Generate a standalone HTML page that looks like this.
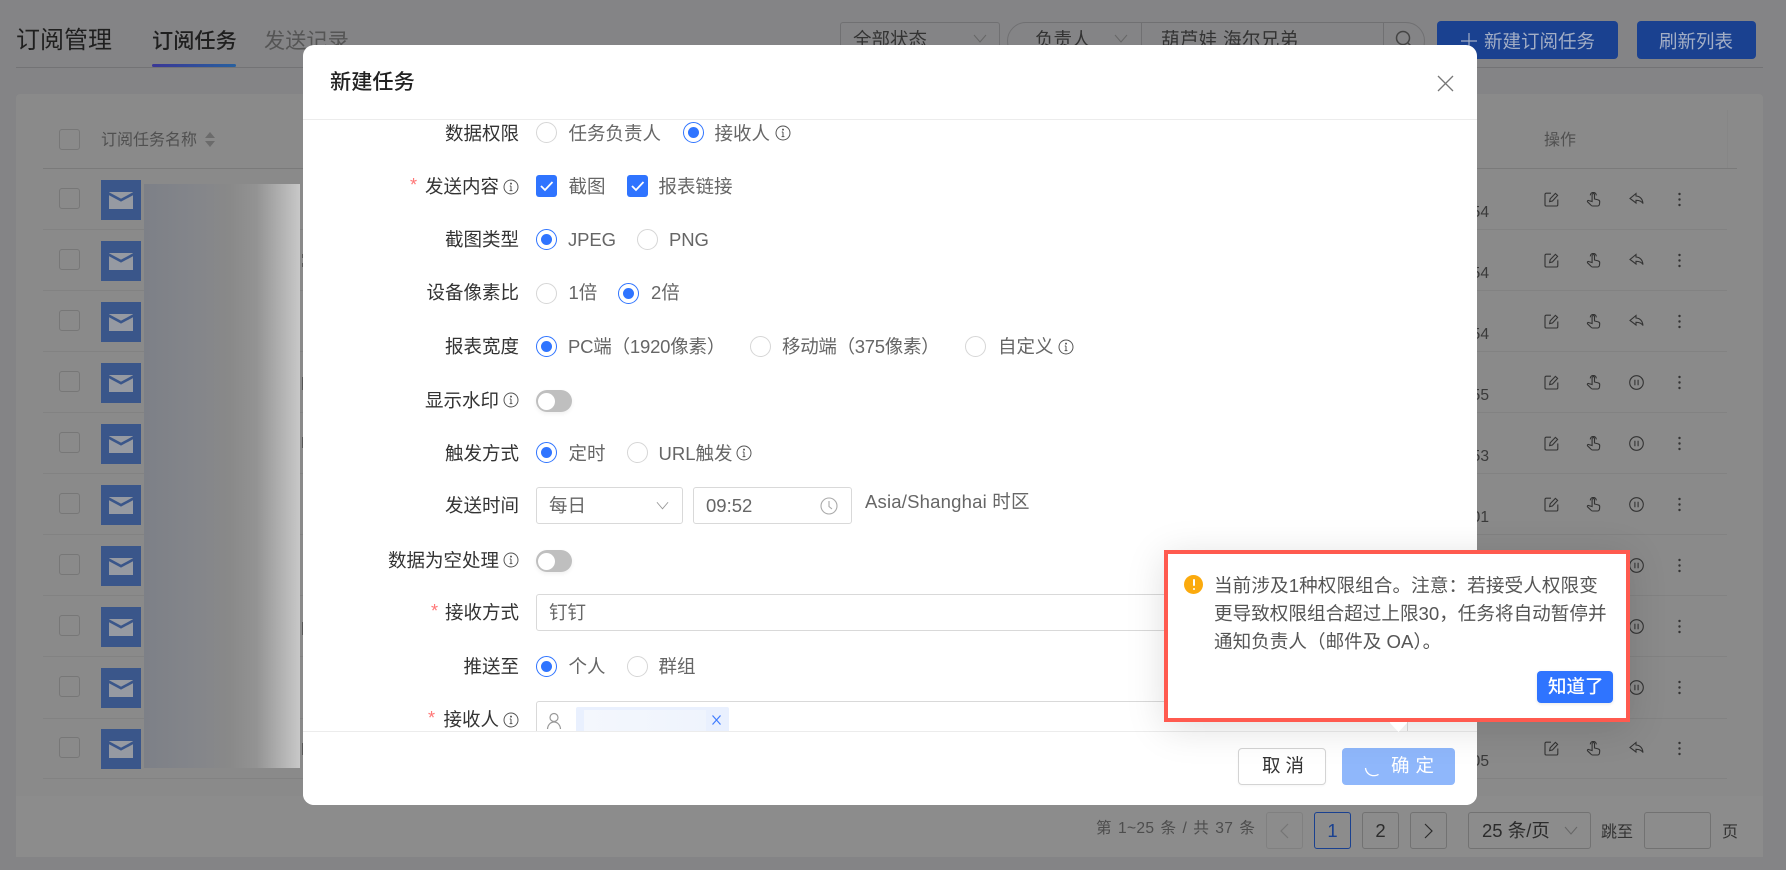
<!DOCTYPE html>
<html lang="zh-CN">
<head>
<meta charset="utf-8">
<title>新建任务</title>
<style>
html,body{margin:0;padding:0;width:1786px;height:870px;overflow:hidden;background:#848486;font-family:"Liberation Sans","Noto Sans CJK SC",sans-serif}
#p{position:relative;width:1786px;height:870px;overflow:hidden}
#p div,#p span,#p svg{position:absolute;box-sizing:border-box}
.t{white-space:nowrap;line-height:26px;height:26px;font-size:18.5px;color:#666}
.l{white-space:nowrap;line-height:26px;height:26px;font-size:18.5px;color:#333;right:1267px;text-align:right}
.li{right:1287px}
.r{width:21px;height:21px;border-radius:50%;border:1px solid #d6d6d6;background:#fff}
.on{border-color:#2f74ff}
.on::after{content:"";position:absolute;left:4px;top:4px;width:11px;height:11px;border-radius:50%;background:#2f74ff}
.s{left:536px;width:36px;height:22px;border-radius:11px;background:#bfbfbf;box-shadow:0 2px 4px rgba(0,0,0,.06)}
.s::after{content:"";position:absolute;left:2px;top:2.5px;width:17px;height:17px;border-radius:50%;background:#fff}
.st{color:#f77;font-size:18.2px;line-height:26px;height:26px;white-space:nowrap}
.i{width:16px;height:16px;fill:none;stroke:#555;stroke-width:1}
.cb{left:59px;width:21px;height:21px;border:1px solid #777;border-radius:3px}
.m{left:101px;width:40px;height:40px}
.a{width:15px;height:15px;fill:none;stroke:#333;stroke-width:1.1}
.tm{font-size:15.6px;color:#3a3a3a;line-height:20px;height:20px;right:297px;white-space:nowrap}
.hl{left:43px;width:1684px;height:1px;background:#828282}
.pg{width:37px;height:37px;border:1px solid #727272;border-radius:3px;text-align:center;line-height:35px;font-size:18.5px;color:#2c2c2c;top:812px}
.box{border:1px solid #d9d9d9;border-radius:3px;background:#fff}
.pl{font-size:18.6px;color:#555;white-space:nowrap;line-height:26px;height:26px}
.tk{left:301.5px;width:1.5px;background:#565656}
</style>
</head>
<body>
<div id="p">
<svg width="0" height="0" style="left:0;top:0">
<defs>
<symbol id="info" viewBox="0 0 16 16"><circle cx="8" cy="8" r="7"/><path d="M8 7v4.6M6.8 7H8M6.6 11.6h2.8"/><circle cx="8" cy="4.6" r=".5" fill="#555"/></symbol>
<symbol id="mail" viewBox="0 0 40 40"><rect width="40" height="40" fill="#3a568a"/><rect x="8" y="12" width="24" height="17" fill="#969aa2"/><path d="M7 13.2 20 20.2 33 13.2" fill="none" stroke="#3a568a" stroke-width="2.6"/></symbol>
<symbol id="edit" viewBox="0 0 15 15"><path d="M7 1.2H2.2A1.2 1.2 0 0 0 1 2.4v10.4A1.2 1.2 0 0 0 2.2 14h10.4a1.2 1.2 0 0 0 1.2-1.2V7.5"/><path d="M5.6 9.6 6.2 6.8 11.4 1.4 13.6 3.4 8.4 9z"/></symbol>
<symbol id="hand" viewBox="0 0 15 15"><path d="M4.3 3.4a3 3 0 0 1 6 0"/><path d="M6.1 9.5V2.8a1.2 1.2 0 0 1 2.4 0V7l3.7.9c1 .2 1.6 1 1.5 2l-.2 2.2c-.1 1-1 1.9-2 1.9H6.5c-.7 0-1.3-.4-1.7-1L1.5 9.8c-.5-.9.5-1.800 1.400-1.200z"/></symbol>
<symbol id="reply" viewBox="0 0 15 15"><path d="M7 1.5 1 6.5l6 4.5V8.300c3 0 5.500.7 7 3.200C13.500 7 11 4.300 7 4z"/></symbol>
<symbol id="pause" viewBox="0 0 15 15"><circle cx="7.5" cy="7.5" r="6.8"/><path d="M5.9 4.8v5.4M9.1 4.8v5.4"/></symbol>
<symbol id="dots" viewBox="0 0 15 15"><circle cx="7.5" cy="2" r="1.2" fill="#333" stroke="none"/><circle cx="7.5" cy="7.5" r="1.2" fill="#333" stroke="none"/><circle cx="7.5" cy="13" r="1.2" fill="#333" stroke="none"/></symbol>
<symbol id="chev" viewBox="0 0 14 9"><path d="M1 1l6 7 6-7" fill="none"/></symbol>
</defs>
</svg>

<!-- page header -->
<div class="t" style="left:16px;top:28px;font-size:24px;color:#1f1f1f">订阅管理</div>
<div class="t" style="left:152px;top:29px;font-size:21.2px;color:#1f1f1f;font-weight:500">订阅任务</div>
<div class="t" style="left:264px;top:29px;font-size:21.2px;color:#555">发送记录</div>
<div style="left:16px;top:67px;width:1747px;height:1px;background:#737375"></div>
<div style="left:152px;top:64px;width:84px;height:3px;border-radius:2px;background:linear-gradient(90deg,#3a3796,#27609f)"></div>

<div style="left:840px;top:22px;width:160px;height:38px;border:1px solid #707072;border-radius:3px"></div>
<div class="t" style="left:853px;top:27px;color:#333">全部状态</div>
<svg style="left:973px;top:34px;width:14px;height:9px;stroke:#666"><use href="#chev"/></svg>
<div style="left:1007px;top:22px;width:418px;height:38px;border:1px solid #707072;border-radius:19px"></div>
<div style="left:1141px;top:22px;width:1px;height:38px;background:#707072"></div>
<div style="left:1383px;top:22px;width:1px;height:38px;background:#707072"></div>
<div class="t" style="left:1035px;top:27px;color:#333">负责人</div>
<svg style="left:1114px;top:34px;width:14px;height:9px;stroke:#666"><use href="#chev"/></svg>
<div class="t" style="left:1161px;top:27px;color:#333;letter-spacing:.35px">葫芦娃 海尔兄弟</div>
<svg style="left:1394px;top:29px;width:20px;height:20px;fill:none;stroke:#444;stroke-width:1.5" viewBox="0 0 20 20"><circle cx="9" cy="9" r="6.5"/><path d="M14 14l4 4"/></svg>
<div style="left:1437px;top:21px;width:181px;height:38px;border-radius:4px;background:#1a4190"></div>
<div style="left:1637px;top:21px;width:119px;height:38px;border-radius:4px;background:#1a4190"></div>
<svg style="left:1461px;top:33px;width:16px;height:16px;stroke:#a3aec5;stroke-width:1.2" viewBox="0 0 16 16"><path d="M8 0v16M0 8h16"/></svg>
<div class="t" style="left:1484px;top:29px;color:#a3aec5">新建订阅任务</div>
<div class="t" style="left:1659px;top:29px;color:#a3aec5">刷新列表</div>

<!-- table card -->
<div style="left:16px;top:94px;width:1747px;height:763px;background:#8a8a8a;border-radius:4px 4px 0 0"></div>
<div style="left:16px;top:796px;width:1747px;height:61px;background:#8c8c8c"></div>
<div class="cb" style="top:129px"></div>
<div class="t" style="left:101px;top:128px;font-size:16px;color:#505050">订阅任务名称</div>
<div style="left:205px;top:132px;width:0;height:0;border-left:5.5px solid transparent;border-right:5.5px solid transparent;border-bottom:6px solid #6b6b6b"></div>
<div style="left:205px;top:141px;width:0;height:0;border-left:5.5px solid transparent;border-right:5.5px solid transparent;border-top:6px solid #6b6b6b"></div>
<div class="t" style="left:1544px;top:128px;font-size:16px;color:#505050">操作</div>
<div style="left:43px;top:168px;width:1694px;height:1px;background:#7a7a7a"></div>
<div style="left:1727px;top:110px;width:1px;height:58px;background:#868686"></div>

<div class="hl" style="top:229px"></div><div class="hl" style="top:290px"></div><div class="hl" style="top:351px"></div><div class="hl" style="top:412px"></div><div class="hl" style="top:473px"></div><div class="hl" style="top:534px"></div><div class="hl" style="top:595px"></div><div class="hl" style="top:656px"></div><div class="hl" style="top:718px"></div><div class="hl" style="top:778px"></div>

<div class="cb" style="top:188px"></div><div class="cb" style="top:249px"></div><div class="cb" style="top:310px"></div><div class="cb" style="top:371px"></div><div class="cb" style="top:432px"></div><div class="cb" style="top:493px"></div><div class="cb" style="top:554px"></div><div class="cb" style="top:615px"></div><div class="cb" style="top:676px"></div><div class="cb" style="top:737px"></div>

<svg class="m" style="top:180px"><use href="#mail"/></svg><svg class="m" style="top:241px"><use href="#mail"/></svg><svg class="m" style="top:302px"><use href="#mail"/></svg><svg class="m" style="top:363px"><use href="#mail"/></svg><svg class="m" style="top:424px"><use href="#mail"/></svg><svg class="m" style="top:485px"><use href="#mail"/></svg><svg class="m" style="top:546px"><use href="#mail"/></svg><svg class="m" style="top:607px"><use href="#mail"/></svg><svg class="m" style="top:668px"><use href="#mail"/></svg><svg class="m" style="top:729px"><use href="#mail"/></svg>

<div style="left:144px;top:184px;width:156px;height:584px;background:linear-gradient(90deg,#7d8087 0,#83858a 30%,#898989 55%,#939393 72%,#c8c8c8 100%)"></div>
<div class="tk" style="top:254px;height:4px"></div><div class="tk" style="top:263px;height:4px"></div>
<div class="tk" style="top:377px;height:13px"></div>
<div class="tk" style="top:437px;height:11px"></div>
<div class="tk" style="top:622px;height:13px"></div>
<div class="tk" style="top:743px;height:12px"></div>

<div class="tm" style="top:203px">00:54</div>
<div class="tm" style="top:264px">00:54</div>
<div class="tm" style="top:325px">00:54</div>
<div class="tm" style="top:386px">00:55</div>
<div class="tm" style="top:447px">00:53</div>
<div class="tm" style="top:508px">00:01</div>
<div class="tm" style="top:752px">00:05</div>

<svg class="a" style="left:1544px;top:192px"><use href="#edit"/></svg><svg class="a" style="left:1586px;top:192px"><use href="#hand"/></svg><svg class="a" style="left:1629px;top:192px"><use href="#reply"/></svg><svg class="a" style="left:1672px;top:192px"><use href="#dots"/></svg>
<svg class="a" style="left:1544px;top:253px"><use href="#edit"/></svg><svg class="a" style="left:1586px;top:253px"><use href="#hand"/></svg><svg class="a" style="left:1629px;top:253px"><use href="#reply"/></svg><svg class="a" style="left:1672px;top:253px"><use href="#dots"/></svg>
<svg class="a" style="left:1544px;top:314px"><use href="#edit"/></svg><svg class="a" style="left:1586px;top:314px"><use href="#hand"/></svg><svg class="a" style="left:1629px;top:314px"><use href="#reply"/></svg><svg class="a" style="left:1672px;top:314px"><use href="#dots"/></svg>
<svg class="a" style="left:1544px;top:375px"><use href="#edit"/></svg><svg class="a" style="left:1586px;top:375px"><use href="#hand"/></svg><svg class="a" style="left:1629px;top:375px"><use href="#pause"/></svg><svg class="a" style="left:1672px;top:375px"><use href="#dots"/></svg>
<svg class="a" style="left:1544px;top:436px"><use href="#edit"/></svg><svg class="a" style="left:1586px;top:436px"><use href="#hand"/></svg><svg class="a" style="left:1629px;top:436px"><use href="#pause"/></svg><svg class="a" style="left:1672px;top:436px"><use href="#dots"/></svg>
<svg class="a" style="left:1544px;top:497px"><use href="#edit"/></svg><svg class="a" style="left:1586px;top:497px"><use href="#hand"/></svg><svg class="a" style="left:1629px;top:497px"><use href="#pause"/></svg><svg class="a" style="left:1672px;top:497px"><use href="#dots"/></svg>
<svg class="a" style="left:1629px;top:558px"><use href="#pause"/></svg><svg class="a" style="left:1672px;top:558px"><use href="#dots"/></svg>
<svg class="a" style="left:1629px;top:619px"><use href="#pause"/></svg><svg class="a" style="left:1672px;top:619px"><use href="#dots"/></svg>
<svg class="a" style="left:1629px;top:680px"><use href="#pause"/></svg><svg class="a" style="left:1672px;top:680px"><use href="#dots"/></svg>
<svg class="a" style="left:1544px;top:741px"><use href="#edit"/></svg><svg class="a" style="left:1586px;top:741px"><use href="#hand"/></svg><svg class="a" style="left:1629px;top:741px"><use href="#reply"/></svg><svg class="a" style="left:1672px;top:741px"><use href="#dots"/></svg>

<!-- pagination -->
<div class="t" style="left:1096px;top:816px;font-size:15.6px;color:#4d4d4d;letter-spacing:.3px;word-spacing:1.5px">第 1~25 条 / 共 37 条</div>
<div class="pg" style="left:1266px;border-color:#808080"></div>
<svg style="left:1280px;top:823px;width:9px;height:16px;fill:none;stroke:#757575;stroke-width:1.2" viewBox="0 0 9 16"><path d="M8 1 1 8l7 7"/></svg>
<div class="pg" style="left:1314px;border-color:#1a4190;color:#1a4190;font-weight:500">1</div>
<div class="pg" style="left:1362px">2</div>
<div class="pg" style="left:1410px"></div>
<svg style="left:1424px;top:823px;width:9px;height:16px;fill:none;stroke:#2c2c2c;stroke-width:1.2" viewBox="0 0 9 16"><path d="M1 1l7 7-7 7"/></svg>
<div class="pg" style="left:1468px;width:123px;text-align:left;padding-left:13px;white-space:nowrap">25 条/页</div>
<svg style="left:1564px;top:826px;width:14px;height:9px;stroke:#666"><use href="#chev"/></svg>
<div class="t" style="left:1601px;top:820px;font-size:16px;color:#333">跳至</div>
<div class="pg" style="left:1644px;width:67px"></div>
<div class="t" style="left:1722px;top:820px;font-size:16px;color:#333">页</div>

<!-- modal -->
<div style="left:303px;top:45px;width:1174px;height:760px;background:#fff;border-radius:11px"></div>
<div class="t" style="left:330px;top:70px;font-size:21.2px;color:#222;font-weight:500">新建任务</div>
<svg style="left:1437px;top:75px;width:17px;height:17px;stroke:#777;stroke-width:1.3;fill:none" viewBox="0 0 17 17"><path d="M1 1l15 15M16 1 1 16"/></svg>
<div style="left:303px;top:119px;width:1174px;height:1px;background:#ececec"></div>

<!-- form -->
<div class="l" style="top:121px">数据权限</div>
<div class="r" style="left:536px;top:122px"></div><div class="t" style="left:568.5px;top:121px">任务负责人</div>
<div class="r on" style="left:683px;top:122px"></div><div class="t" style="left:714.5px;top:121px">接收人</div>
<svg class="i" style="left:775px;top:125px"><use href="#info"/></svg>

<div class="st" style="left:410px;top:172px">*</div>
<div class="l li" style="top:174px">发送内容</div>
<svg class="i" style="left:503px;top:179px"><use href="#info"/></svg>
<div style="left:536px;top:175px;width:21px;height:22px;border-radius:3px;background:#2f74ff"></div>
<svg style="left:536px;top:175px;width:21px;height:22px;fill:none;stroke:#fff;stroke-width:1.8" viewBox="0 0 21 22"><path d="M5 11l4 4 7.5-8"/></svg>
<div class="t" style="left:568.5px;top:174px">截图</div>
<div style="left:627px;top:175px;width:21px;height:22px;border-radius:3px;background:#2f74ff"></div>
<svg style="left:627px;top:175px;width:21px;height:22px;fill:none;stroke:#fff;stroke-width:1.8" viewBox="0 0 21 22"><path d="M5 11l4 4 7.5-8"/></svg>
<div class="t" style="left:658.5px;top:174px">报表链接</div>

<div class="l" style="top:227px">截图类型</div>
<div class="r on" style="left:536px;top:229px"></div><div class="t" style="left:568px;top:227px;letter-spacing:-.1px">JPEG</div>
<div class="r" style="left:637px;top:229px"></div><div class="t" style="left:669px;top:227px;letter-spacing:-.1px">PNG</div>

<div class="l" style="top:280px">设备像素比</div>
<div class="r" style="left:536px;top:283px"></div><div class="t" style="left:568.5px;top:280px">1倍</div>
<div class="r on" style="left:618px;top:283px"></div><div class="t" style="left:651px;top:280px">2倍</div>

<div class="l" style="top:334px">报表宽度</div>
<div class="r on" style="left:536px;top:336px"></div><div class="t" style="left:568px;top:334px;letter-spacing:-.2px">PC端（1920像素）</div>
<div class="r" style="left:750px;top:336px"></div><div class="t" style="left:782px;top:334px;letter-spacing:-.3px">移动端（375像素）</div>
<div class="r" style="left:965px;top:336px"></div><div class="t" style="left:998px;top:334px">自定义</div>
<svg class="i" style="left:1058px;top:339px"><use href="#info"/></svg>

<div class="l li" style="top:388px">显示水印</div>
<svg class="i" style="left:503px;top:392px"><use href="#info"/></svg>
<div class="s" style="top:390px"></div>

<div class="l" style="top:441px">触发方式</div>
<div class="r on" style="left:536px;top:442px"></div><div class="t" style="left:568.5px;top:441px">定时</div>
<div class="r" style="left:627px;top:442px"></div><div class="t" style="left:658.5px;top:441px">URL触发</div>
<svg class="i" style="left:736px;top:445px"><use href="#info"/></svg>

<div class="l" style="top:493px">发送时间</div>
<div class="box" style="left:536px;top:487px;width:147px;height:37px"></div>
<div class="t" style="left:549px;top:493px">每日</div>
<svg style="left:656px;top:501px;width:13px;height:9px;stroke:#999"><use href="#chev"/></svg>
<div class="box" style="left:693px;top:487px;width:159px;height:37px"></div>
<div class="t" style="left:706px;top:493px">09:52</div>
<svg style="left:820px;top:497px;width:18px;height:18px;fill:none;stroke:#aaa;stroke-width:1.1" viewBox="0 0 18 18"><circle cx="9" cy="9" r="8"/><path d="M9 4v5.5l3 2.5"/></svg>
<div class="t" style="left:865px;top:489px;letter-spacing:.2px">Asia/Shanghai 时区</div>

<div class="l li" style="top:548px">数据为空处理</div>
<svg class="i" style="left:503px;top:552px"><use href="#info"/></svg>
<div class="s" style="top:550px"></div>

<div class="st" style="left:431px;top:598px">*</div>
<div class="l" style="top:600px">接收方式</div>
<div class="box" style="left:536px;top:594px;width:872px;height:37px"></div>
<div class="t" style="left:549px;top:600px">钉钉</div>

<div class="l" style="top:654px">推送至</div>
<div class="r on" style="left:536px;top:656px"></div><div class="t" style="left:568.5px;top:654px">个人</div>
<div class="r" style="left:627px;top:656px"></div><div class="t" style="left:658.5px;top:654px">群组</div>

<div class="st" style="left:428px;top:705px">*</div>
<div class="l li" style="top:707px">接收人</div>
<svg class="i" style="left:503px;top:712px"><use href="#info"/></svg>
<div class="box" style="left:536px;top:701px;width:872px;height:60px"></div>
<svg style="left:546px;top:712px;width:16px;height:18px;fill:none;stroke:#999;stroke-width:1.2" viewBox="0 0 16 18"><circle cx="8" cy="5.5" r="4"/><path d="M1.5 17c.3-4 3-7 6.5-7s6.2 3 6.5 7"/></svg>
<div style="left:576px;top:707px;width:153px;height:40px;border-radius:2px;background:#e9f0fe"></div>
<div style="left:584px;top:710px;width:122px;height:30px;background:linear-gradient(90deg,#f4f7fd,#eff4fd)"></div>
<svg style="left:712px;top:715px;width:9px;height:10px;stroke:#3f7cff;stroke-width:1.2" viewBox="0 0 9 10"><path d="M.5.5l8 9M8.5.5l-8 9"/></svg>

<!-- modal footer -->
<div style="left:303px;top:731px;width:1174px;height:74px;background:#fff;border-top:1px solid #ececec;border-radius:0 0 11px 11px"></div>
<div style="left:1238px;top:748px;width:88px;height:37px;border:1px solid #d4d4d4;border-radius:4px;background:#fff;box-shadow:0 1px 2px rgba(0,0,0,.04)"></div>
<div class="t" style="left:1262px;top:753px;color:#333;letter-spacing:5px">取消</div>
<div style="left:1342px;top:748px;width:113px;height:37px;border-radius:4px;background:#8fb7fb"></div>
<svg style="left:1363px;top:764px;width:18px;height:14px;fill:none;stroke:#fff;stroke-width:1.3" viewBox="0 0 18 14"><path d="M2.5 4c.5 5 4.5 8 9.5 7.600 1.500-.1 2.800-.6 3.500-1.200"/></svg>
<div class="t" style="left:1391px;top:753px;color:#fff;letter-spacing:6px">确定</div>

<!-- popover -->
<div style="left:1164px;top:550px;width:466px;height:172px;background:#fff;border:4px solid #ff5a4f;box-shadow:0 6px 36px rgba(0,0,0,.13)"></div>
<div style="left:1407px;top:722px;width:1px;height:9px;background:#cfcfcf"></div>
<div style="left:1390px;top:722px;width:17px;height:10px;background:#fff;clip-path:polygon(0 0,100% 0,100% 10%,50% 100%,0 10%)"></div>
<div style="left:1184px;top:575px;width:19px;height:19px;border-radius:50%;background:#fbaa0d"></div>
<div style="left:1192.5px;top:579px;width:2px;height:7px;border-radius:1px;background:#fff"></div>
<div style="left:1192.5px;top:588px;width:2px;height:2px;background:#fff;border-radius:1px"></div>
<div class="pl" style="left:1214px;top:573px;letter-spacing:.08px">当前涉及1种权限组合。注意：若接受人权限变</div>
<div class="pl" style="left:1214px;top:601px">更导致权限组合超过上限30，任务将自动暂停并</div>
<div class="pl" style="left:1214px;top:629px">通知负责人（邮件及 OA）。</div>
<div style="left:1537px;top:671px;width:76px;height:32px;border-radius:4px;background:#2f74ff;box-shadow:0 1px 3px rgba(0,0,0,.1)"></div>
<div class="t" style="left:1548px;top:674px;color:#fff;font-weight:500">知道了</div>
</div>
</body>
</html>
